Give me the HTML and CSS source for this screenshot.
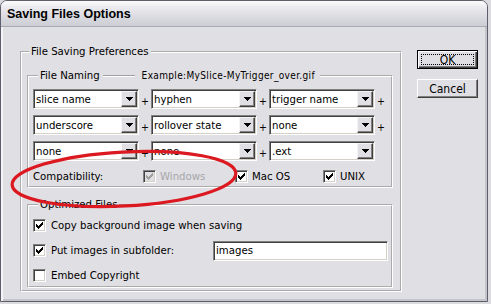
FILE: index.html
```html
<!DOCTYPE html>
<html>
<head>
    <meta charset="UTF-8">
    <title>Saving Files Options</title>
    <link rel="stylesheet" href="styles.css">
</head>
<body>
    <div class="window">
        <div class="titlebar">Saving Files Options</div>
        <div class="client">
            <fieldset class="group outer">
                <legend>File Saving Preferences</legend>

                <!-- file naming -->
                <fieldset class="group naming">
                    <legend class="naming-legend">
                        <span class="legend-text">File Naming</span>
                        <span class="rule"></span>
                        <span class="example">Example:MySlice-MyTrigger_over.gif</span>
                    </legend>
                    <div class="combo-row">
                        <div class="combo"><span class="combo-text">slice name</span><span class="combo-btn"><svg width="7" height="4" viewBox="0 0 7 4"><path d="M0 0h7v1h-1v1h-1v1h-1v1h-1v-1h-1v-1h-1v-1h-1z" fill="#000"/></svg></span></div>
                        <span class="plus">+</span>
                        <div class="combo"><span class="combo-text">hyphen</span><span class="combo-btn"><svg width="7" height="4" viewBox="0 0 7 4"><path d="M0 0h7v1h-1v1h-1v1h-1v1h-1v-1h-1v-1h-1v-1h-1z" fill="#000"/></svg></span></div>
                        <span class="plus">+</span>
                        <div class="combo"><span class="combo-text">trigger name</span><span class="combo-btn"><svg width="7" height="4" viewBox="0 0 7 4"><path d="M0 0h7v1h-1v1h-1v1h-1v1h-1v-1h-1v-1h-1v-1h-1z" fill="#000"/></svg></span></div>
                        <span class="plus">+</span>
                    </div>
                    <div class="combo-row">
                        <div class="combo"><span class="combo-text">underscore</span><span class="combo-btn"><svg width="7" height="4" viewBox="0 0 7 4"><path d="M0 0h7v1h-1v1h-1v1h-1v1h-1v-1h-1v-1h-1v-1h-1z" fill="#000"/></svg></span></div>
                        <span class="plus">+</span>
                        <div class="combo"><span class="combo-text">rollover state</span><span class="combo-btn"><svg width="7" height="4" viewBox="0 0 7 4"><path d="M0 0h7v1h-1v1h-1v1h-1v1h-1v-1h-1v-1h-1v-1h-1z" fill="#000"/></svg></span></div>
                        <span class="plus">+</span>
                        <div class="combo"><span class="combo-text">none</span><span class="combo-btn"><svg width="7" height="4" viewBox="0 0 7 4"><path d="M0 0h7v1h-1v1h-1v1h-1v1h-1v-1h-1v-1h-1v-1h-1z" fill="#000"/></svg></span></div>
                        <span class="plus">+</span>
                    </div>
                    <div class="combo-row">
                        <div class="combo"><span class="combo-text">none</span><span class="combo-btn"><svg width="7" height="4" viewBox="0 0 7 4"><path d="M0 0h7v1h-1v1h-1v1h-1v1h-1v-1h-1v-1h-1v-1h-1z" fill="#000"/></svg></span></div>
                        <span class="plus">+</span>
                        <div class="combo"><span class="combo-text">none</span><span class="combo-btn"><svg width="7" height="4" viewBox="0 0 7 4"><path d="M0 0h7v1h-1v1h-1v1h-1v1h-1v-1h-1v-1h-1v-1h-1z" fill="#000"/></svg></span></div>
                        <span class="plus">+</span>
                        <div class="combo"><span class="combo-text">.ext</span><span class="combo-btn"><svg width="7" height="4" viewBox="0 0 7 4"><path d="M0 0h7v1h-1v1h-1v1h-1v1h-1v-1h-1v-1h-1v-1h-1z" fill="#000"/></svg></span></div>
                    </div>
                    <div class="compat-row">
                        <span class="compat-label">Compatibility:</span>
                        <label class="check-item compat-win disabled">
                            <span class="check"><svg width="9" height="9" viewBox="0 0 9 9"><path d="M7 1h1v1h-1z M6 2h2v1h-2z M1 3h1v1h-1z M5 3h3v1h-3z M1 4h2v1h-2z M4 4h3v1h-3z M1 5h5v1h-5z M2 6h3v1h-3z M3 7h1v1h-1z"/></svg></span>
                            Windows
                        </label>
                        <label class="check-item compat-mac">
                            <span class="check"><svg width="9" height="9" viewBox="0 0 9 9"><path d="M7 1h1v1h-1z M6 2h2v1h-2z M1 3h1v1h-1z M5 3h3v1h-3z M1 4h2v1h-2z M4 4h3v1h-3z M1 5h5v1h-5z M2 6h3v1h-3z M3 7h1v1h-1z"/></svg></span>
                            Mac OS
                        </label>
                        <label class="check-item">
                            <span class="check"><svg width="9" height="9" viewBox="0 0 9 9"><path d="M7 1h1v1h-1z M6 2h2v1h-2z M1 3h1v1h-1z M5 3h3v1h-3z M1 4h2v1h-2z M4 4h3v1h-3z M1 5h5v1h-5z M2 6h3v1h-3z M3 7h1v1h-1z"/></svg></span>
                            UNIX
                        </label>
                    </div>
                </fieldset>

                <!-- optimized files -->
                <fieldset class="group optimized">
                    <legend>Optimized Files</legend>
                    <div class="opt-row">
                        <label class="check-item wide">
                            <span class="check"><svg width="9" height="9" viewBox="0 0 9 9"><path d="M7 1h1v1h-1z M6 2h2v1h-2z M1 3h1v1h-1z M5 3h3v1h-3z M1 4h2v1h-2z M4 4h3v1h-3z M1 5h5v1h-5z M2 6h3v1h-3z M3 7h1v1h-1z"/></svg></span>
                            Copy background image when saving
                        </label>
                    </div>
                    <div class="opt-row">
                        <label class="check-item wide subfolder">
                            <span class="check"><svg width="9" height="9" viewBox="0 0 9 9"><path d="M7 1h1v1h-1z M6 2h2v1h-2z M1 3h1v1h-1z M5 3h3v1h-3z M1 4h2v1h-2z M4 4h3v1h-3z M1 5h5v1h-5z M2 6h3v1h-3z M3 7h1v1h-1z"/></svg></span>
                            Put images in subfolder:
                        </label>
                        <div class="textbox">images</div>
                    </div>
                    <div class="opt-row">
                        <label class="check-item wide">
                            <span class="check"></span>
                            Embed Copyright
                        </label>
                    </div>
                </fieldset>
            </fieldset>

            <div class="buttons">
                <button type="button" class="btn btn-default"><span class="focus">OK</span></button>
                <button type="button" class="btn">Cancel</button>
            </div>
        </div>
    </div>

    <!-- red marker drawn over the dialog -->
    <svg class="marker" width="491" height="304" viewBox="0 0 491 304">
        <ellipse cx="124" cy="179" rx="112" ry="27" transform="rotate(-3 124 179)" fill="none" stroke="#dc1820" stroke-width="3.2"/>
    </svg>
</body>
</html>
```

FILE: styles.css
```css
html,
body {
    margin: 0;
    padding: 0;
}

body {
    background-color: #dcdce0;
    font-family: "DejaVu Sans Condensed", "DejaVu Sans", sans-serif;
    font-stretch: condensed;
    font-size: 11.3px;
    color: #000;
}

.window {
    width: 488px;
    height: 302px;
    box-sizing: border-box;
    display: flex;
    flex-direction: column;
    background-color: #e0dfe3;
    border: 1px solid #5f5f6c;
    border-radius: 7px 7px 0 0;
    overflow: hidden;
}

.titlebar {
    height: 25px;
    flex: none;
    display: flex;
    align-items: center;
    padding-left: 6px;
    font-family: "Liberation Sans", Arial, sans-serif;
    font-stretch: normal;
    font-size: 12.5px;
    font-weight: bold;
    background: linear-gradient(#fbfbfc, #e6e6eb 35%, #d6d6dd 75%, #cdcdd4);
    border-bottom: 1px solid #a9a9b3;
}

.client {
    flex: 1;
    display: flex;
    align-items: flex-start;
    padding: 0 9px 0 19px;
    box-shadow: inset 2px 0 #f4f4f6, inset -2px -2px #c4c4cb;
}

/* group boxes */
.group {
    margin: 0;
    border: 2px groove #fff;
    min-width: 0;
}

.group > legend {
    padding: 0 2px;
    line-height: 14px;
}

.outer {
    flex: none;
    width: 382px;
    box-sizing: border-box;
    margin-top: 18px;
    padding: 0 7px 2px 5px;
}

.outer > legend {
    margin-left: 2px;
}

.naming {
    margin-top: 10px;
    padding: 6px 4px 1px 4px;
}

.naming > legend {
    margin-left: 5px;
}

.naming-legend {
    display: flex;
    align-items: center;
}

.legend-text {
    padding-right: 3px;
}

.rule {
    width: 32px;
    height: 0;
    border-top: 1px solid #a0a0a4;
    border-bottom: 1px solid #fff;
}

.example {
    padding: 0 3px 0 7px;
    font-size: 10px;
    letter-spacing: 0.35px;
}

.combo-row {
    display: flex;
    align-items: center;
    height: 20px;
    margin-bottom: 6px;
}

.combo {
    width: 106px;
    height: 20px;
    box-sizing: border-box;
    display: flex;
    align-items: center;
    padding: 1px;
    background-color: #fff;
    border: 1px solid;
    border-color: #808080 #fff #fff #808080;
    box-shadow: inset 1px 1px #404040, inset -1px -1px #d4d0c8;
}

.combo-text {
    flex: 1;
    padding-left: 1px;
    white-space: nowrap;
}

.combo-btn {
    width: 16px;
    height: 16px;
    box-sizing: border-box;
    display: flex;
    align-items: center;
    justify-content: center;
    background-color: #e0dfe3;
    border: 1px solid;
    border-color: #f4f4f6 #404040 #404040 #f4f4f6;
    box-shadow: inset -1px -1px #808080;
}

.plus {
    width: 12px;
    text-align: center;
    font-size: 10.5px;
    padding-top: 3px;
}

.compat-row {
    display: flex;
    align-items: center;
    height: 18px;
}

.compat-label {
    width: 110px;
}

/* checkboxes */
.check-item {
    display: flex;
    align-items: center;
    gap: 4px;
    white-space: nowrap;
}

.compat-win {
    width: 92px;
}

.compat-mac {
    width: 88px;
}

.check {
    width: 13px;
    height: 13px;
    flex: none;
    box-sizing: border-box;
    display: flex;
    align-items: center;
    justify-content: center;
    background-color: #fff;
    border: 1px solid;
    border-color: #808080 #fff #fff #808080;
    box-shadow: inset 1px 1px #404040, inset -1px -1px #d4d0c8;
}

.check svg {
    fill: #000;
}

.disabled {
    color: #a6a6aa;
}

.disabled .check {
    background-color: #e0dfe3;
}

.disabled .check svg {
    fill: #a0a0a0;
}

/* optimized files */
.optimized {
    margin-top: 10px;
    padding: 3px 3px 0 4px;
}

.optimized > legend {
    margin-left: 5px;
}

.opt-row {
    display: flex;
    align-items: center;
    height: 21px;
    margin-bottom: 4px;
}

.opt-row:last-child {
    margin-bottom: 0;
}

.wide {
    gap: 5px;
}

.subfolder {
    width: 180px;
}

.textbox {
    width: 175px;
    height: 20px;
    box-sizing: border-box;
    display: flex;
    align-items: center;
    padding-left: 2px;
    background-color: #fff;
    border: 1px solid;
    border-color: #808080 #fff #fff #808080;
    box-shadow: inset 1px 1px #404040, inset -1px -1px #d4d0c8;
}

/* buttons */
.buttons {
    display: flex;
    flex-direction: column;
    gap: 10px;
    margin-top: 23px;
    margin-left: 15px;
}

.btn {
    width: 61px;
    height: 19px;
    box-sizing: border-box;
    display: flex;
    align-items: center;
    justify-content: center;
    padding: 0;
    font: inherit;
    font-size: 12px;
    color: #000;
    background-color: #e0dfe3;
    border: 1px solid;
    border-color: #fff #404040 #404040 #fff;
    box-shadow: inset -1px -1px #808080;
}

.btn-default {
    padding: 3px;
    border: 1px solid #000;
    box-shadow: inset 1px 1px #fff, inset -1px -1px #404040, inset -2px -2px #808080;
}

.focus {
    flex: 1;
    align-self: stretch;
    display: flex;
    align-items: center;
    justify-content: center;
    border: 1px dotted #000;
}

.marker {
    position: absolute;
    top: 0;
    left: 0;
    pointer-events: none;
}
```
